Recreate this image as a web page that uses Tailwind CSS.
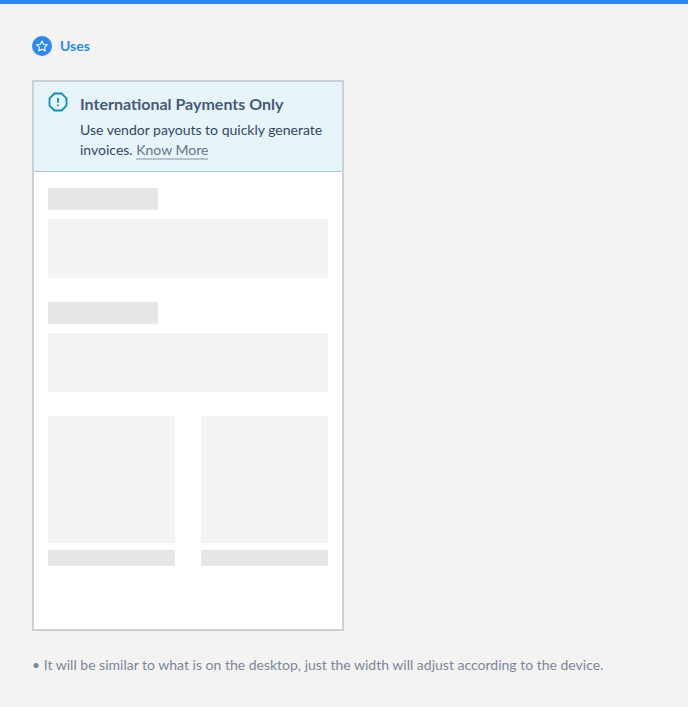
<!DOCTYPE html>
<html lang="en">
<head>
<meta charset="utf-8">
<title>Uses</title>
<script src="https://cdn.jsdelivr.net/npm/@tailwindcss/browser@4"></script>
</head>
<body class="h-[707px] overflow-hidden border-t-4 border-[#2b87f5] bg-[#f3f3f3] px-8 pt-8 font-['Lato',sans-serif] text-sm">
  <header class="flex h-5 items-center gap-2">
    <svg class="size-5" viewBox="0 0 20 20" fill="none"><circle cx="10" cy="10" r="10" fill="#2b87f5"/><path d="M10 5l1.6 3.3 3.6.5-2.6 2.5.6 3.6-3.2-1.7-3.2 1.7.6-3.6-2.6-2.5 3.6-.5z" stroke="#fff" stroke-width="1.15" stroke-linejoin="round"/></svg>
    <h1 class="font-bold leading-5 text-[#2b87f5]">Uses</h1>
  </header>
  <main class="mt-6 flex h-[551px] w-[312px] flex-col border-2 border-[#cbd0d5] bg-white">
    <section class="flex h-[90px] shrink-0 gap-3 rounded-b-[2px] border-b border-[#9dcddb] bg-[#e7f4f9] pl-[14px] pt-[10px]">
      <svg class="size-5 shrink-0" viewBox="0 0 20 20" fill="none" stroke="#0891b4" stroke-width="1.8"><path d="M6.4 1.5h7.2l4.9 4.9v7.2l-4.9 4.9H6.4l-4.9-4.9V6.4z" stroke-linejoin="round"/><path d="M10 6v4.8m0 1.7v1.6"/></svg>
      <div class="text-[#354867]">
        <h2 class="text-base font-bold leading-6 text-[#465a7b]">International Payments Only</h2>
        <p class="mt-1 whitespace-nowrap leading-5">Use vendor payouts to quickly generate<br>invoices. <a class="pb-0.5 text-[#65748e] shadow-[inset_0_-2px_0_#b7c2cf]">Know More</a></p>
      </div>
    </section>
    <div class="px-[14px] pt-4">
      <div class="h-[22px] w-[110px] border-b border-[#ebecec] bg-[#e5e7e9]"></div>
      <div class="mt-[9px] h-[59px] bg-[#f3f3f3]"></div>
      <div class="mt-6 h-[22px] w-[110px] border-b border-[#ebecec] bg-[#e5e7e9]"></div>
      <div class="mt-[9px] h-[59px] bg-[#f3f3f3]"></div>
      <div class="mt-6 grid grid-cols-2 gap-[26px]">
        <div><div class="h-[127px] bg-[#f3f3f3]"></div><div class="mt-[7px] h-4 bg-[#e5e7e9]"></div></div>
        <div><div class="h-[127px] bg-[#f3f3f3]"></div><div class="mt-[7px] h-4 bg-[#e5e7e9]"></div></div>
      </div>
    </div>
  </main>
  <p class="mt-6 whitespace-nowrap leading-5 text-[#7b8799]">• It will be similar to what is on the desktop, just the width will adjust according to the device.</p>
</body>
</html>
